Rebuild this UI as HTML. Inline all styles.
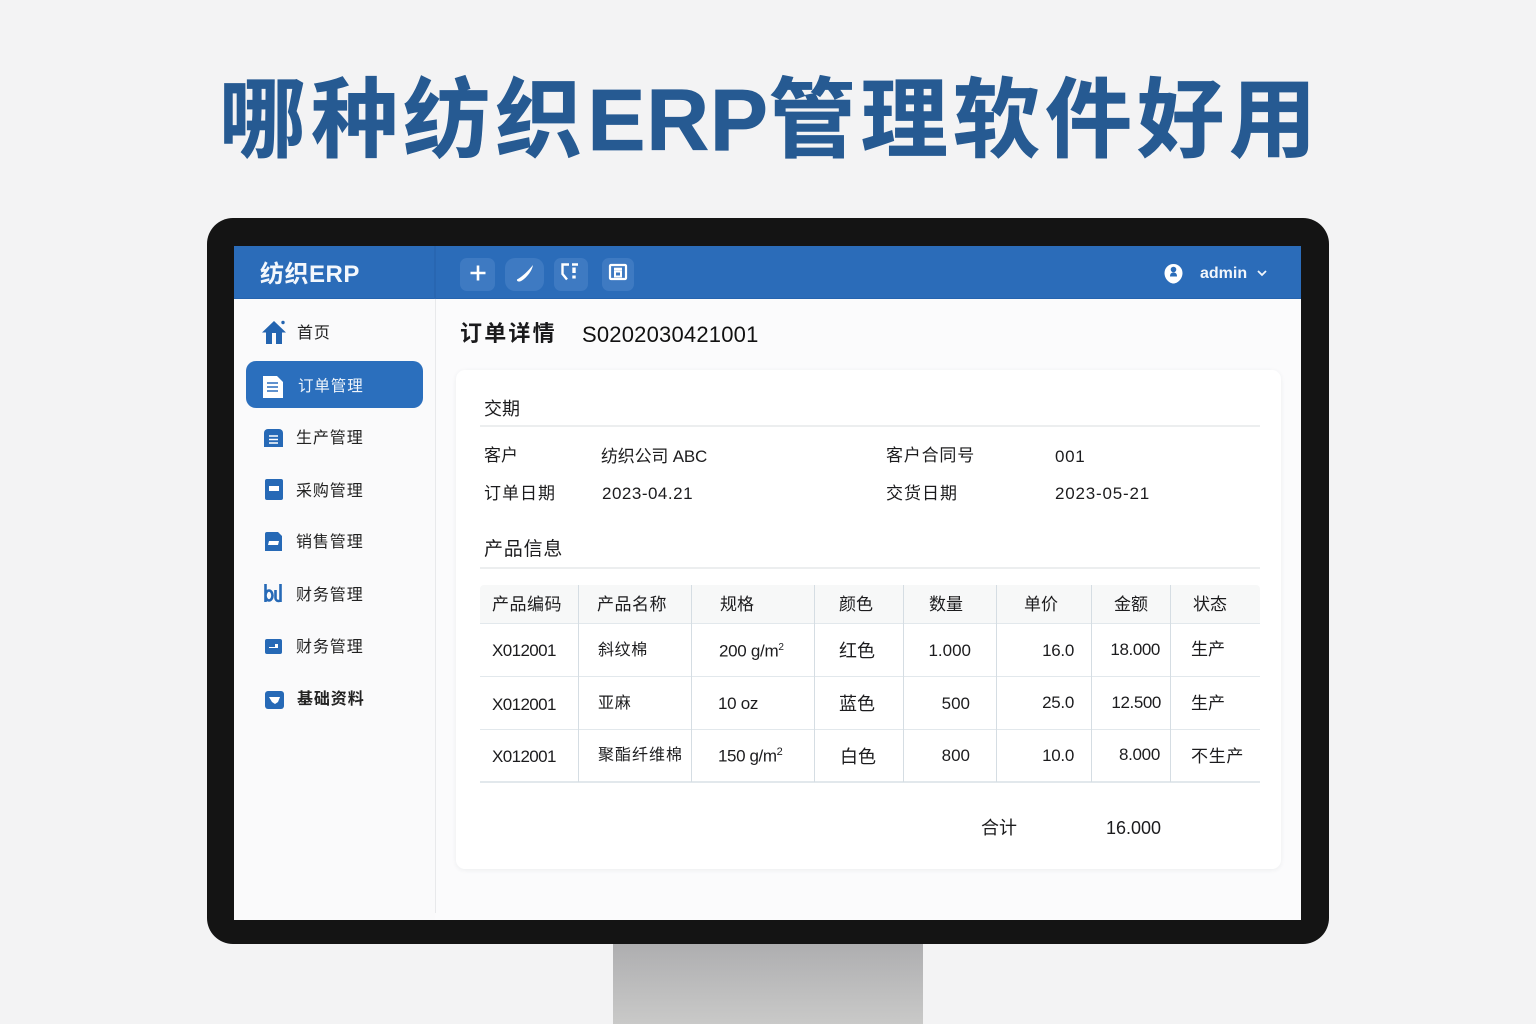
<!DOCTYPE html>
<html lang="zh-CN">
<head>
<meta charset="utf-8">
<title>哪种纺织ERP管理软件好用</title>
<style>
*{box-sizing:border-box;margin:0;padding:0}
html,body{width:1536px;height:1024px;overflow:hidden;background:#f3f3f4}
body{position:relative;font-family:"Liberation Sans","Noto Sans CJK SC",sans-serif;color:#1c1c1e}
.a{position:absolute}
.t{position:absolute;line-height:0;white-space:nowrap;font-size:17px}
.r{text-align:right}
svg{position:absolute;display:block}
.title{position:absolute;left:219px;top:121px;line-height:0;font-size:87px;font-weight:700;letter-spacing:5.100px;color:#265a92;white-space:nowrap;-webkit-text-stroke:.8px #265a92}
.title span{letter-spacing:.8px}
.hl{position:absolute;background:#e2e8ec}
.v{position:absolute;width:1px;background:#d5dde3;top:585px;height:197px}
.tb{position:absolute;top:258px;height:33px;border-radius:7px;background:#3e7ac2}
.nav{font-size:16px;letter-spacing:.9px;color:#222}
.x{letter-spacing:-.6px}
</style>
</head>
<body>
<div class="title">哪种纺织<span>ERP</span>管理软件好用</div>

<div class="a" style="left:613px;top:944px;width:310px;height:80px;background:linear-gradient(#aeaeb0,#c9c9c8)"></div>
<div class="a" style="left:207px;top:218px;width:1122px;height:726px;border-radius:26px;background:#141414"></div>
<div class="a" style="left:234px;top:246px;width:1067px;height:674px;background:#fbfbfc"></div>

<div class="a" style="left:234px;top:246px;width:1067px;height:53px;background:#2b6cb9;border-bottom:1px solid #2563ae"></div>
<div class="a" style="left:434px;top:246px;width:2px;height:53px;background:#2866b1"></div>
<div class="t" style="left:260px;top:275px;font-size:24px;font-weight:700;letter-spacing:.5px;color:#f3f7fc">纺织ERP</div>

<div class="tb" style="left:460px;width:35px"></div>
<div class="tb" style="left:505px;width:39px;border-radius:10px"></div>
<div class="tb" style="left:554px;width:34px"></div>
<div class="tb" style="left:602px;width:32px"></div>
<svg style="left:468px;top:263px" width="20" height="20" viewBox="0 0 20 20"><path d="M10 2.500v15M2.500 10h15" stroke="#fff" stroke-width="2.600" fill="none"/></svg>
<svg style="left:514px;top:262px" width="22" height="22" viewBox="0 0 22 22"><path d="M19 3C18 9 13 15 8 18.500 6 20 2.500 20 3 17.500 8 15 14 9 19 3Z" fill="#fff"/></svg>
<svg style="left:560px;top:262px" width="20" height="20" viewBox="0 0 20 20"><path d="M9 2.500H2.500v9.500L7 17.500M12 2.500h6" stroke="#fff" stroke-width="2.400" fill="none"/><path d="M14 5.500v5.500M14 13.500v3" stroke="#fff" stroke-width="3.400" fill="none"/></svg>
<svg style="left:608px;top:262px" width="20" height="20" viewBox="0 0 20 20"><rect x="2" y="3" width="16" height="14" rx="1" fill="none" stroke="#fff" stroke-width="2.200"/><path d="M6 7h8" stroke="#fff" stroke-width="2.600"/><rect x="7" y="9.500" width="6" height="5" fill="none" stroke="#fff" stroke-width="2"/></svg>

<svg style="left:1163px;top:263px" width="21" height="22" viewBox="0 0 21 22"><path d="M10.500 1A9 9 0 0 1 19.500 10c0 6-5 10.500-9 10.500S1.500 16 1.500 10A9 9 0 0 1 10.500 1Z" fill="#fff"/><circle cx="10.500" cy="6.500" r="2.800" fill="#2b6cb9"/><path d="M7 13.500c0-3 1.500-4 3.500-4s3.500 1 3.500 4z" fill="#2b6cb9"/></svg>
<div class="t" style="left:1200px;top:274px;font-size:16px;font-weight:700;color:#f2f6fb">admin</div>
<svg style="left:1256px;top:269px" width="12" height="9" viewBox="0 0 12 9"><path d="M2 2l4 4 4-4" stroke="#f2f6fb" stroke-width="1.800" fill="none"/></svg>

<div class="a" style="left:234px;top:299px;width:201px;height:621px;background:#fafafb"></div>
<div class="a" style="left:435px;top:299px;width:1px;height:614px;background:#e8e9eb"></div>

<svg style="left:261px;top:319px" width="26" height="26" viewBox="0 0 26 26"><path d="M13 2 1 13.500h4V25h6V14h4v11h6V13.500h4z" fill="#2364b0"/><circle cx="22" cy="3.500" r="1.700" fill="#2364b0"/></svg>
<div class="t nav" style="left:297px;top:334px">首页</div>

<div class="a" style="left:246px;top:361px;width:177px;height:47px;border-radius:10px;background:#2b6fbd"></div>
<svg style="left:262px;top:375px" width="22" height="24" viewBox="0 0 22 24"><path d="M1 1h14l6 6v16H1z" fill="#fff"/><path d="M5 8h11M5 12h11M5 16h11" stroke="#2b6fbd" stroke-width="1.600"/></svg>
<div class="t nav" style="left:298px;top:387px;color:#eef4fb;font-size:15.500px">订单管理</div>

<svg style="left:264px;top:429px" width="19" height="18" viewBox="0 0 19 18"><path d="M4 0h11a4 4 0 0 1 4 4v14H0V4a4 4 0 0 1 4-4z" fill="#2669b6"/><path d="M5 7h9M5 10.500h9M5 14h9" stroke="#fff" stroke-width="1.500"/></svg>
<div class="t nav" style="left:296px;top:439px">生产管理</div>

<svg style="left:265px;top:479px" width="18" height="21" viewBox="0 0 18 21"><rect width="18" height="21" rx="2" fill="#2669b6"/><rect x="4" y="7" width="10" height="5" fill="#fff"/></svg>
<div class="t nav" style="left:296px;top:492px">采购管理</div>

<svg style="left:265px;top:532px" width="17" height="19" viewBox="0 0 17 19"><path d="M2 0h11l4 4v15H0V2a2 2 0 0 1 2-2z" fill="#2669b6"/><path d="M4 9h10l-1 4H3z" fill="#fff"/></svg>
<div class="t nav" style="left:296px;top:543px">销售管理</div>

<svg style="left:264px;top:584px" width="19" height="19" viewBox="0 0 19 19"><path d="M1.500 0v18M1.500 11.500a3.500 5 0 1 1 7 0 3.500 5 0 0 1-7 0M11.500 6v8a3 3 0 0 0 3 3h1M16.500 0v18" stroke="#2669b6" stroke-width="2.600" fill="none"/></svg>
<div class="t nav" style="left:296px;top:596px">财务管理</div>

<svg style="left:265px;top:639px" width="17" height="15" viewBox="0 0 17 15"><rect width="17" height="15" rx="2" fill="#2669b6"/><path d="M4 8h6V5h3v4H4z" fill="#fff"/></svg>
<div class="t nav" style="left:296px;top:648px">财务管理</div>

<svg style="left:265px;top:691px" width="19" height="18" viewBox="0 0 19 18"><rect width="19" height="18" rx="3" fill="#2669b6"/><path d="M4 6h11l-2 5-3 2-3-2z" fill="#fff"/></svg>
<div class="t nav" style="left:297px;top:700px;font-weight:700">基础资料</div>

<div class="t" style="left:460px;top:334px;font-size:22px;font-weight:700;letter-spacing:2.200px;color:#1a1a1c">订单详情</div>
<div class="t" style="left:582px;top:335px;font-size:22px;letter-spacing:.2px;color:#111">S0202030421001</div>

<div class="a" style="left:456px;top:370px;width:825px;height:499px;background:#fff;border-radius:9px;box-shadow:0 1px 5px rgba(40,50,70,.07)"></div>

<div class="t" style="left:484px;top:409px;font-size:18px">交期</div>
<div class="hl" style="left:480px;top:425px;width:780px;height:2px;background:#eceeef"></div>
<div class="t" style="left:484px;top:456px">客户</div>
<div class="t" style="left:601px;top:457px;letter-spacing:-.2px">纺织公司 ABC</div>
<div class="t" style="left:886px;top:456px;letter-spacing:.8px">客户合同号</div>
<div class="t" style="left:1055px;top:457px;letter-spacing:.7px">001</div>
<div class="t" style="left:484px;top:494px;letter-spacing:1px">订单日期</div>
<div class="t" style="left:602px;top:494px;letter-spacing:.5px">2023-04.21</div>
<div class="t" style="left:886px;top:494px;letter-spacing:1px">交货日期</div>
<div class="t" style="left:1055px;top:494px;letter-spacing:.8px">2023-05-21</div>
<div class="t" style="left:484px;top:550px;font-size:19px;letter-spacing:.8px">产品信息</div>
<div class="hl" style="left:480px;top:567px;width:780px;height:2px;background:#eceeef"></div>

<div class="a" style="left:480px;top:585px;width:780px;height:38px;background:#f7f8f8;border-radius:4px 4px 0 0"></div>
<div class="hl" style="left:480px;top:623px;width:780px;height:1px"></div>
<div class="hl" style="left:480px;top:676px;width:780px;height:1px"></div>
<div class="hl" style="left:480px;top:729px;width:780px;height:1px"></div>
<div class="hl" style="left:480px;top:781px;width:780px;height:2px"></div>
<div class="v" style="left:578px"></div>
<div class="v" style="left:691px"></div>
<div class="v" style="left:814px"></div>
<div class="v" style="left:903px"></div>
<div class="v" style="left:996px"></div>
<div class="v" style="left:1091px"></div>
<div class="v" style="left:1170px"></div>

<div class="t" style="left:492px;top:605px;letter-spacing:.5px">产品编码</div>
<div class="t" style="left:597px;top:605px;letter-spacing:.5px">产品名称</div>
<div class="t" style="left:720px;top:605px">规格</div>
<div class="t" style="left:839px;top:605px">颜色</div>
<div class="t" style="left:929px;top:605px">数量</div>
<div class="t" style="left:1024px;top:605px">单价</div>
<div class="t" style="left:1114px;top:605px">金额</div>
<div class="t" style="left:1193px;top:605px">状态</div>

<div class="t x" style="left:492px;top:651px">X012001</div>
<div class="t" style="left:598px;top:651px;font-size:16px;letter-spacing:.6px">斜纹棉</div>
<div class="t" style="left:719px;top:648px;letter-spacing:-.3px">200 g/m<sup style="font-size:10px;line-height:0">2</sup></div>
<div class="t" style="left:839px;top:651px;font-size:18px">红色</div>
<div class="t r" style="right:565px;top:651px">1.000</div>
<div class="t r" style="right:462px;top:651px;letter-spacing:-.3px">16.0</div>
<div class="t r" style="right:376px;top:650px;letter-spacing:-.4px">18.000</div>
<div class="t" style="left:1191px;top:650px">生产</div>

<div class="t x" style="left:492px;top:705px">X012001</div>
<div class="t" style="left:598px;top:704px;font-size:16px;letter-spacing:.8px">亚麻</div>
<div class="t" style="left:718px;top:704px;letter-spacing:-.3px">10 oz</div>
<div class="t" style="left:839px;top:704px;font-size:18px">蓝色</div>
<div class="t r" style="right:566px;top:704px">500</div>
<div class="t r" style="right:462px;top:703px;letter-spacing:-.3px">25.0</div>
<div class="t r" style="right:375px;top:703px;letter-spacing:-.4px">12.500</div>
<div class="t" style="left:1191px;top:704px">生产</div>

<div class="t x" style="left:492px;top:757px">X012001</div>
<div class="t" style="left:598px;top:756px;font-size:16px;letter-spacing:1px">聚酯纤维棉</div>
<div class="t" style="left:718px;top:752px;letter-spacing:-.4px">150 g/m<sup style="font-size:11px;line-height:0">2</sup></div>
<div class="t" style="left:840px;top:757px;font-size:18px">白色</div>
<div class="t r" style="right:566px;top:756px">800</div>
<div class="t r" style="right:462px;top:756px;letter-spacing:-.3px">10.0</div>
<div class="t r" style="right:376px;top:755px;letter-spacing:-.3px">8.000</div>
<div class="t" style="left:1191px;top:757px;letter-spacing:.7px">不生产</div>

<div class="t" style="left:981px;top:828px;font-size:18px">合计</div>
<div class="t r" style="right:375px;top:828px;font-size:18px">16.000</div>
</body>
</html>
